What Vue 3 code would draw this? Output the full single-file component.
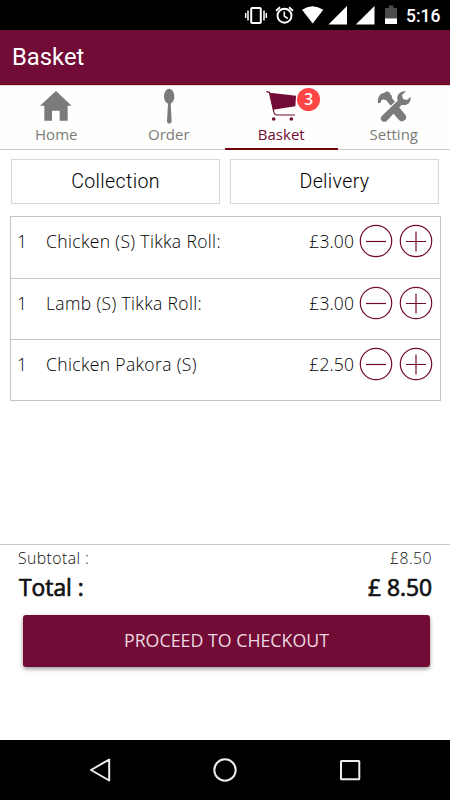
<script setup>
import { ref } from 'vue'

const tabs = [
  { id: 'home', label: 'Home' },
  { id: 'order', label: 'Order' },
  { id: 'basket', label: 'Basket' },
  { id: 'setting', label: 'Setting' },
]
const active = ref('basket')
const items = ref([
  { qty: 1, name: 'Chicken (S) Tikka Roll:', price: '£3.00' },
  { qty: 1, name: 'Lamb (S) Tikka Roll:', price: '£3.00' },
  { qty: 1, name: 'Chicken Pakora (S)', price: '£2.50' },
])
</script>

<template>
  <div class="screen">
    <div class="status">
      <svg class="status-icons" viewBox="0 0 160 30">
        <g fill="none" stroke="#fff">
          <rect x="8.2" y="8" width="9.6" height="15" rx="1" stroke-width="2" />
          <path d="M5 10.5v10M21 10.5v10" stroke-width="1.5" />
          <path d="M2.7 13v5M23.3 13v5" stroke-width="1.5" />
          <circle cx="41.5" cy="15.7" r="7" stroke-width="1.9" />
          <path d="M41.3 11.5v4.7l3.5 2.3" stroke-width="1.5" />
          <path d="M33 10.7l4-3.5M50 10.7l-4-3.5" stroke-width="1.8" />
        </g>
        <g fill="#fff">
          <path d="M59 9.8Q69.5 2.5 80.3 9.8L69.7 23.6Z" />
          <path d="M85.5 24.5L104 6V24.5Z" />
          <path d="M112.8 24.5L131.5 6V24.5Z" />
          <path d="M142 18.2h12V24h-12z" />
        </g>
        <path d="M142 8h4V5.5h4.5V8H154v10.2h-12z" fill="#4c4c4c" />
      </svg>
      <span class="clock">5:16</span>
    </div>

    <header class="appbar"><h1>Basket</h1></header>

    <nav class="tabs">
      <button v-for="t in tabs" :key="t.id" class="tab" :class="{ active: active === t.id }" @click="active = t.id">
        <span class="icon">
          <svg v-if="t.id === 'home'" viewBox="0 0 120 120">
            <path d="M60 15L107 59H95V104H71V74H48V104H25V59H12Z" />
          </svg>
          <svg v-else-if="t.id === 'order'" viewBox="0 0 120 120">
            <path d="M60 8C70 8 76 20 76 32C76 42 71 49 65 53L68 106Q68 113 61 113Q54 113 54 106L57 53C50 49 45 42 45 32C45 20 51 8 60 8Z" />
          </svg>
          <svg v-else-if="t.id === 'basket'" viewBox="0 0 120 120">
            <path d="M26 20L105 29L103 61L36 71Z" />
            <path d="M16 17L25 19L39 80Q41 87 49 87H102" class="line" />
            <circle cx="38" cy="99" r="5.5" />
            <circle cx="91" cy="99" r="5.5" />
          </svg>
          <svg v-else viewBox="0 0 120 120">
            <path d="M12 52C9 34 18 22 31 20L39 16L46 19L50 26L54 30L53 35L63 47L50 59L37 43C30 40 26 39 22 43L20 50Z" />
            <path d="M70 57L95 88Q100 96 92 103Q83 110 75 102L52 76Z" />
            <path d="M96 16L84 27L87 39L99 42L110 32C111 51 98 61 83 56L39 104Q30 111 23 104Q17 97 24 89L71 44C65 27 80 13 96 16Z" />
          </svg>
          <span v-if="t.id === 'basket'" class="badge">3</span>
        </span>
        <span class="tab-label">{{ t.label }}</span>
      </button>
    </nav>

    <main class="content">
      <div class="modes">
        <button class="mode">Collection</button>
        <button class="mode">Delivery</button>
      </div>
      <ul class="items">
        <li v-for="item in items" :key="item.name" class="item">
          <span class="qty">{{ item.qty }}</span>
          <span class="name">{{ item.name }}</span>
          <span class="price">{{ item.price }}</span>
          <button class="round" aria-label="Remove one">
            <svg viewBox="0 0 34 34"><circle cx="17" cy="17" r="15.7" /><path d="M7 17.5H27" /></svg>
          </button>
          <button class="round" aria-label="Add one">
            <svg viewBox="0 0 34 34"><circle cx="17" cy="17" r="15.7" /><path d="M7 17.5H27M17 7.5V27.5" /></svg>
          </button>
        </li>
      </ul>
    </main>

    <footer class="summary">
      <div class="row subtotal"><span>Subtotal :</span><span>£8.50</span></div>
      <div class="row total"><span>Total :</span><span>£ 8.50</span></div>
      <button class="checkout">PROCEED TO CHECKOUT</button>
    </footer>

    <div class="softkeys">
      <svg viewBox="0 0 30 30"><path d="M24.2 4.5V25.5L6 15Z" /></svg>
      <svg viewBox="0 0 30 30"><circle cx="15" cy="15" r="10.7" /></svg>
      <svg viewBox="0 0 30 30"><rect x="6" y="6" width="18.3" height="18.3" rx="0.5" /></svg>
    </div>
  </div>
</template>

<style>
body { margin: 0; background: #fff; }
</style>

<style scoped>
.screen { width: 450px; height: 800px; display: flex; flex-direction: column; background: #fff; font-family: "Open Sans", "Noto Sans", sans-serif; overflow: hidden; }
button { border: 0; padding: 0; margin: 0; background: none; font: inherit; color: inherit; }
.status { height: 30px; background: #000; display: flex; align-items: center; justify-content: flex-end; padding-right: 10px; box-sizing: border-box; }
.status-icons { width: 160px; height: 30px; margin-right: 3px; }
.clock { width: 34px; color: #fff; font: 500 17.5px/30px Roboto, sans-serif; white-space: nowrap; padding-top: 2px; }
.appbar { height: 55px; box-sizing: border-box; background: #720b35; border-bottom: 1px solid #70000c; padding-left: 12px; }
h1 { margin: 0; color: #fff; font: 400 23.8px/54px Roboto, sans-serif; }
.tabs { height: 65px; display: grid; grid-template-columns: repeat(4, 1fr); background: #fefffc; box-sizing: border-box; border-top: 1px solid #ddd; box-shadow: inset 0 -1px #ccc; }
.tab { display: flex; flex-direction: column; align-items: center; color: #7b7b7b; }
.tab.active { color: #720b35; box-shadow: inset 0 -2px #70000c; }
.icon { position: relative; width: 40px; height: 40px; }
.icon svg { display: block; width: 40px; height: 40px; fill: currentColor; }
.icon .line { fill: none; stroke: currentColor; stroke-width: 3.5; }
.badge { position: absolute; left: 36px; top: 2px; width: 23px; height: 23px; border-radius: 50%; background: #ff4546; color: #fff; font-size: 15.5px; font-weight: 600; line-height: 22px; text-align: center; }
.tab-label { font-size: 15px; line-height: 20px; margin-top: -2px; }
.content { height: 394px; box-sizing: border-box; padding: 9px 9px 0 10px; }
.modes { display: grid; grid-template-columns: 209px 209px; gap: 10px; padding-left: 1px; }
.mode { height: 45px; box-sizing: border-box; border: 1px solid #d8d8d8; color: #000; font: 350 19.6px/43px Roboto, sans-serif; letter-spacing: 0.35px; }
.items { list-style: none; margin: 12px 0 0; padding: 0; border: 1px solid #c4c4c4; }
.item { height: 60px; display: flex; align-items: flex-start; box-sizing: content-box; padding: 0 7px 0 6px; color: #000; font-size: 17.5px; font-weight: 350; letter-spacing: 0.1px; line-height: 48px; }
.item:first-child { height: 61px; }
.item + .item { border-top: 1px solid #c4c4c4; }
.qty { width: 29px; }
.name { flex: 1; letter-spacing: 0.36px; }
.price { margin-right: 5px; }
.round { width: 34px; height: 34px; margin-top: 7px; }
.round + .round { margin-left: 6px; }
.round svg { display: block; width: 34px; height: 34px; fill: none; stroke: #70082f; stroke-width: 1.2; }
.summary { height: 196px; box-sizing: border-box; border-top: 1px solid #c8c8c8; display: flex; flex-direction: column; }
.row { display: flex; justify-content: space-between; padding: 0 18px; }
.subtotal { font-size: 15.8px; font-weight: 350; letter-spacing: 0.42px; line-height: 26px; color: #111; }
.total { font-size: 22.8px; font-weight: 400; -webkit-text-stroke: 0.7px #111; line-height: 34px; color: #111; padding-left: 19px; }
.checkout { height: 52px; margin: 10px 20px 0 23px; border-radius: 3px; background: #720b35; box-shadow: 0 2px 4px rgba(0,0,0,.4); color: #ecd9e0; font-size: 17.8px; line-height: 48px; padding-bottom: 2px; }
.softkeys { height: 60px; background: #000; display: flex; justify-content: space-between; align-items: center; padding: 0 85px; }
.softkeys svg { width: 30px; height: 30px; fill: none; stroke: #eee; stroke-width: 2; stroke-linejoin: round; }
</style>
